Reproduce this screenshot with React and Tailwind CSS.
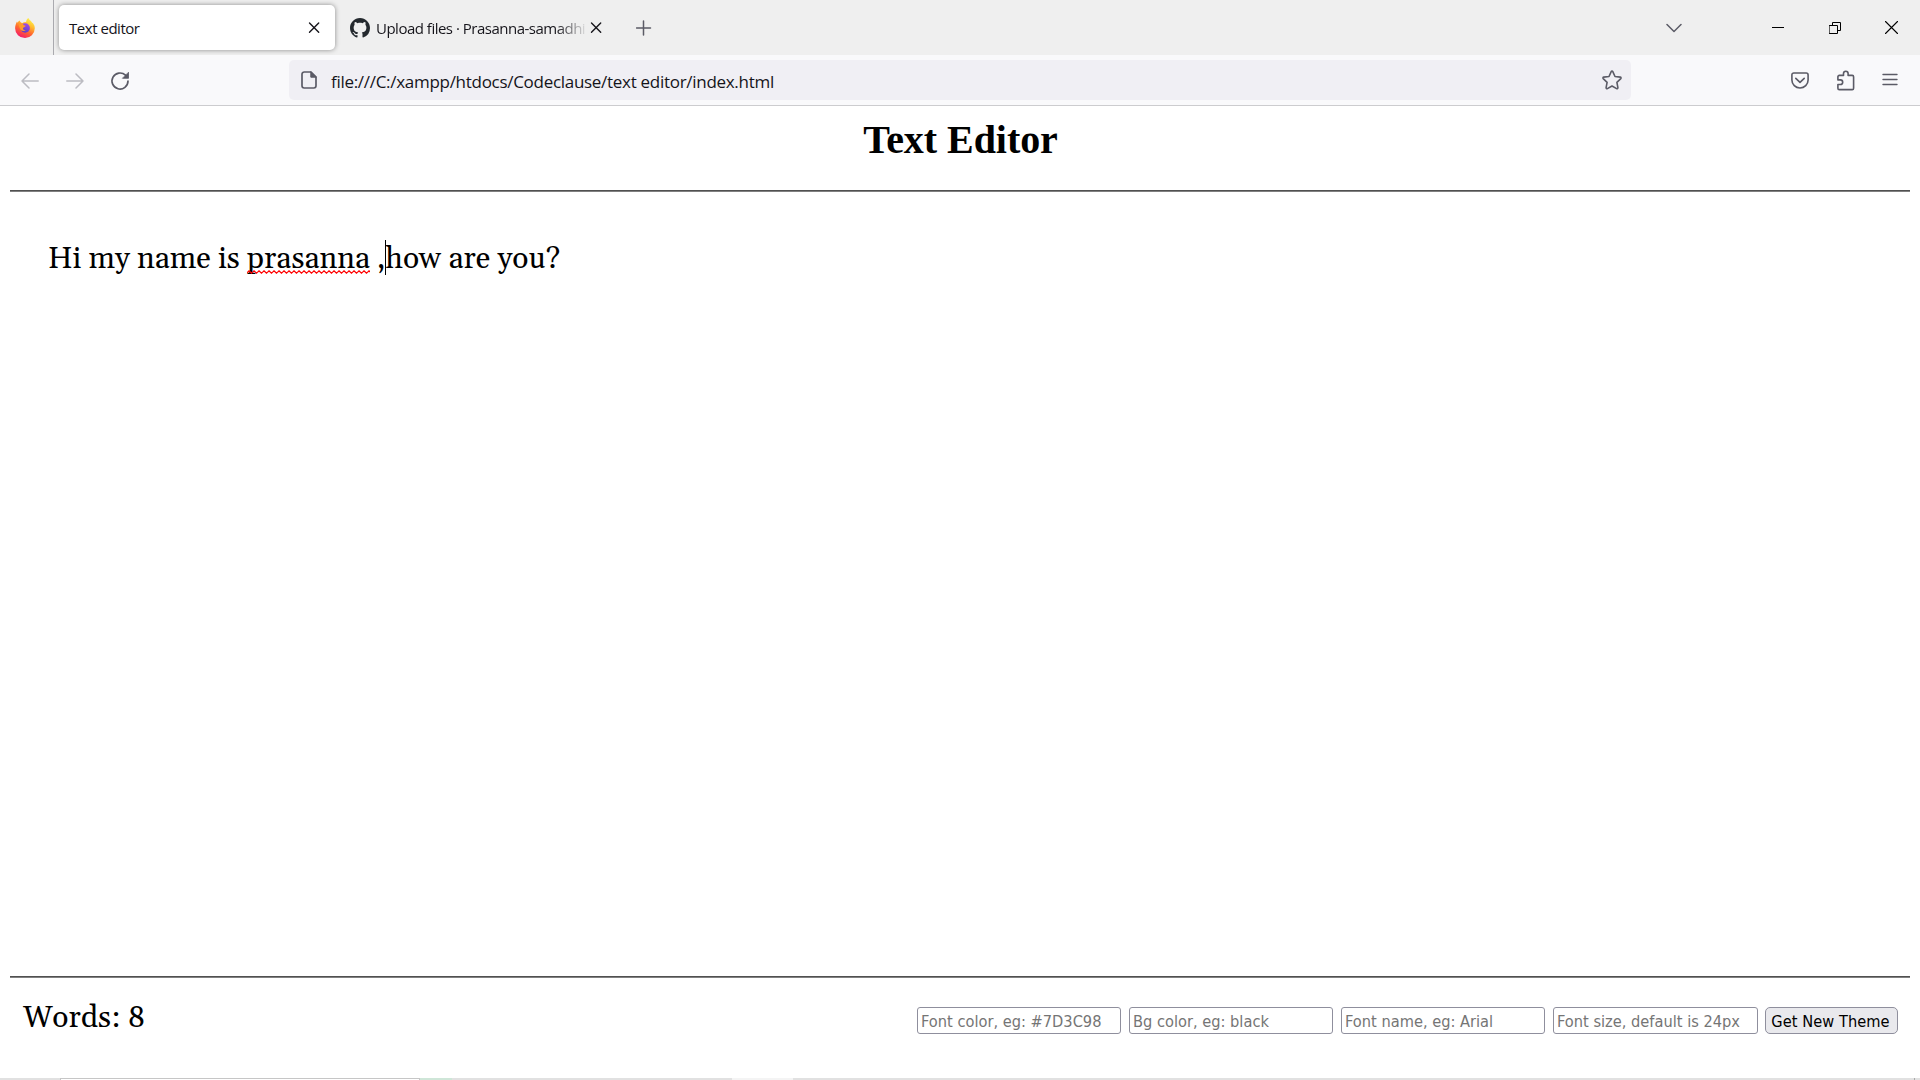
import React from "react";

const FIELDS = [
  { text: "Font color, eg: #7D3C98", size: "w-[204px]" },
  { text: "Bg color, eg: black", size: "w-[204px]" },
  { text: "Font name, eg: Arial", size: "w-[204px]" },
  { text: "Font size, default is 24px", size: "w-[205px]" },
];

function Icon({ w, h, className = "", children }) {
  return (
    <svg
      width={w}
      height={h}
      viewBox={`0 0 ${w} ${h}`}
      fill="none"
      stroke="currentColor"
      strokeWidth="1.5"
      strokeLinecap="round"
      strokeLinejoin="round"
      className={`block shrink-0 ${className}`}
    >
      {children}
    </svg>
  );
}

function Firefox() {
  return (
    <svg width="20" height="20" viewBox="0 0 20 20" className="ml-[15px] block shrink-0">
      <defs>
        <linearGradient id="flame" x1="0.8" y1="0.05" x2="0.3" y2="1">
          <stop offset="0" stopColor="#fff14a" />
          <stop offset="0.3" stopColor="#ffbd2f" />
          <stop offset="0.6" stopColor="#ff6b2d" />
          <stop offset="1" stopColor="#f5156c" />
        </linearGradient>
        <linearGradient id="globe" x1="0.7" y1="0" x2="0.3" y2="1">
          <stop offset="0" stopColor="#a44be8" />
          <stop offset="1" stopColor="#5b3fc4" />
        </linearGradient>
      </defs>
      <path
        fill="url(#flame)"
        d="M19.2 7.2c-.5-1.2-1.4-2.400-2.200-2.800C16 2.900 14 2 13.400.1c-1.500 1-2.200 2.600-2.300 4C9.500 4 8.300 4.400 7.400 5 6 4.800 5.200 3.800 4.600 2.500 3.600 3 3 4 2.700 4.800L2 3.600C1.200 5 .1 8 .1 10.200A9.800 9.800 0 0 0 9.900 20a9.800 9.800 0 0 0 9.900-9.700c0-1.200-.2-2.200-.6-3.100z"
      />
      <circle cx="10.200" cy="10" r="4.700" fill="url(#globe)" />
      <path fill="#ff9a2c" d="M3.500 6.300c2-.9 3.600-.7 4.500-.2.200 1.200 1.600 1.500 2.700 1.700-.3 1.300-2 1.300-2.700 2.200-.3 1.400 1 2.500 2.700 2-1.400 1.600-4.500 1.300-5.700-1.200-.7-1.500-.9-3-1.500-4.500z" />
    </svg>
  );
}

function GithubMark() {
  return (
    <svg width="20" height="20" viewBox="0 0 16 16" fill="#24292e" className="block shrink-0">
      <path d="M8 0C3.58 0 0 3.58 0 8c0 3.54 2.29 6.53 5.47 7.59.4.07.55-.17.55-.38 0-.19-.01-.82-.01-1.49-2.01.37-2.53-.49-2.69-.94-.09-.23-.48-.94-.82-1.13-.28-.15-.68-.52-.01-.53.63-.01 1.08.58 1.23.82.72 1.21 1.87.87 2.33.66.07-.52.28-.87.51-1.07-1.78-.2-3.64-.89-3.64-3.95 0-.87.31-1.59.82-2.15-.08-.2-.36-1.02.08-2.12 0 0 .67-.21 2.2.82.64-.18 1.32-.27 2-.27.68 0 1.36.09 2 .27 1.53-1.04 2.2-.82 2.2-.82.44 1.1.16 1.92.08 2.12.51.56.82 1.27.82 2.15 0 3.07-1.87 3.75-3.65 3.95.29.25.54.73.54 1.48 0 1.07-.01 1.93-.01 2.2 0 .21.15.46.55.38A8.013 8.013 0 0016 8c0-4.42-3.58-8-8-8z" />
    </svg>
  );
}

function CloseGlyph({ className }) {
  return (
    <Icon w={12} h={12} className={`text-[#15141a] ${className}`}>
      <path d="M1.500 1l9.200 9.200M10.700 1l-9.200 9.200" strokeWidth="1.400" />
    </Icon>
  );
}

function TabStrip() {
  return (
    <header className="flex h-[55px] items-center bg-[#efefef] text-[15px] tracking-[-0.47px] text-[#15141a]">
      <Firefox />
      <div className="ml-[18px] h-full w-px shrink-0 bg-[#aaaaaf]" />
      <div className="ml-[5px] flex h-[45px] w-[276px] shrink-0 items-center rounded-[5px] bg-white pl-[10px] shadow-[0_0_5px_rgba(0,0,0,0.42)]">
        <span className="w-[231px] pt-[2px]">Text editor</span>
        <CloseGlyph className="ml-[8px]" />
      </div>
      <div className="ml-[15px] flex items-center">
        <GithubMark />
        <span className="ml-[6px] w-[212px] bg-linear-to-r from-[#15141a] from-85% to-transparent to-100% bg-clip-text pt-[2px] tracking-[-0.5px] whitespace-nowrap text-transparent">
          Upload files · Prasanna-samadhi
        </span>
        <CloseGlyph className="ml-[2px]" />
      </div>
      <Icon w={16} h={16} className="ml-[34px] text-[#5b5b66]">
        <path d="M7.500 1v14M.5 8h14" />
      </Icon>
      <div className="flex flex-1 items-center justify-end pr-[22px]">
        <Icon w={16} h={10} className="mr-[90px] text-[#5b5b66]">
          <path d="M1 1.500l7 7 7-7" />
        </Icon>
        <Icon w={12} h={12} className="mr-[45px] text-black">
          <path d="M0 5.500h12" strokeWidth="1" strokeLinecap="butt" />
        </Icon>
        <Icon w={12} h={12} className="mr-[44px] text-black">
          <path d="M.5 3.500h8v8h-8zM3.500 3.500v-3h8v8h-3" strokeWidth="1" strokeLinejoin="miter" />
        </Icon>
        <Icon w={13} h={13} className="text-black">
          <path d="M.5.5l12 12M12.500.5l-12 12" strokeWidth="1.100" />
        </Icon>
      </div>
    </header>
  );
}

function Toolbar() {
  return (
    <nav className="flex h-[51px] items-center border-b border-[#cccccf] bg-[#f9f9fb] text-[#5b5b66]">
      <Icon w={18} h={16} className="mt-px ml-[21px] text-[#bcbcc2]">
        <path d="M17.200 8H1M8 1L1 8l7 7" />
      </Icon>
      <Icon w={18} h={16} className="mt-px ml-[27px] text-[#bcbcc2]">
        <path d="M.8 8H17M10 1l7 7-7 7" />
      </Icon>
      <Icon w={20} h={20} className="mt-[2px] ml-[26px]">
        <path d="M18 10a8 8 0 1 1-2.500-5.800" strokeWidth="1.700" />
        <path d="M18.500 1.600v5.700h-5.700z" fill="currentColor" strokeWidth=".8" />
      </Icon>
      <div className="ml-[159px] flex h-[40px] w-[1342px] items-center rounded-[5px] bg-[#f0eff4] pl-[12px]">
        <Icon w={16} h={18} className="">
          <path d="M10 1H3.200A2.200 2.200 0 0 0 1 3.200v11.600A2.200 2.200 0 0 0 3.200 17h9.600a2.200 2.200 0 0 0 2.200-2.200V6z" strokeWidth="1.700" />
          <path d="M9.800 1v5.200H15z" fill="currentColor" strokeWidth="1" />
        </Icon>
        <span className="ml-[14px] flex-1 pt-[3px] text-[17px] tracking-[-0.29px] whitespace-nowrap text-[#15141a]">
          file:///C:/xampp/htdocs/Codeclause/text editor/index.html
        </span>
        <Icon w={20} h={20} className="mr-[9px]">
          <path d="M9.200 1.600a.9.900 0 0 1 1.600 0l2.200 4.900 5.300.6a.9.900 0 0 1 .5 1.500l-3.900 3.700 1 5.400a.9.900 0 0 1-1.300.9L10 16l-4.600 2.600a.9.900 0 0 1-1.300-.9l1-5.400-3.900-3.700a.9.900 0 0 1 .5-1.500L7 6.500z" strokeWidth="1.600" />
        </Icon>
      </div>
      <div className="flex flex-1 items-center justify-end pr-[22px]">
        <Icon w={18} h={17} className="mr-[28px]">
          <path d="M2.800 1h12.400A1.900 1.900 0 0 1 17.100 2.900v5a8.100 8.100 0 0 1-16.200 0v-5A1.900 1.900 0 0 1 2.800 1z" strokeWidth="1.600" />
          <path d="M4.800 6.400L9 10.400l4.200-4" strokeWidth="1.600" />
        </Icon>
        <Icon w={18} h={21} className="mr-[27px]">
          <path d="M2.300 5.400h4.200V3.600a2.300 2.300 0 0 1 4.600 0v1.800h4.100a1.400 1.400 0 0 1 1.400 1.400v11.400a1.400 1.400 0 0 1-1.400 1.400H2.300a1.400 1.400 0 0 1-1.400-1.400v-3.700h2.500a2.300 2.300 0 0 0 0-4.600H.9V6.800a1.400 1.400 0 0 1 1.400-1.400z" strokeWidth="1.600" />
        </Icon>
        <Icon w={16} h={14} className="mb-[2px]">
          <path d="M1 2.500h14M1 7.500h14M1 12.500h14" strokeWidth="1.400" />
        </Icon>
      </div>
    </nav>
  );
}

function Rule() {
  return <div className="mx-[10px] h-[2px] border-t border-[#505050] bg-[#808080]" />;
}

function Squiggle() {
  return (
    <svg width="123" height="4" className="absolute top-[28px] left-0 block">
      <defs>
        <pattern id="wave" width="5" height="4" patternUnits="userSpaceOnUse">
          <path d="M-.5 3.200L2 .8l2.500 2.400L7 .8" fill="none" stroke="#f00" strokeWidth="1.200" />
        </pattern>
      </defs>
      <rect width="123" height="4" fill="url(#wave)" />
    </svg>
  );
}

function BottomEdge() {
  return (
    <div className="flex h-[2px] bg-[#e1e1e1]">
      <div className="w-[60px]" />
      <div className="w-[360px] border-x border-t border-[#c6c6c6] bg-white" />
      <div className="w-[32px] bg-[#cfe6d8]" />
      <div className="w-[280px]" />
      <div className="w-[61px] bg-[#f4f4f4]" />
      <div className="w-[1121px]" />
      <div className="w-px bg-[#aaaaaa]" />
    </div>
  );
}

export default function App() {
  return (
    <div className="flex h-[1080px] w-[1920px] flex-col overflow-hidden bg-white font-['Open_Sans',sans-serif]">
      <TabStrip />
      <Toolbar />
      <h1 className="h-[84px] pt-[11px] pl-px text-center font-['Liberation_Serif',serif] text-[40px] leading-[46px] font-bold tracking-[-0.05px] text-black">
        Text Editor
      </h1>
      <Rule />
      <main className="flex-1 pt-[50px] pl-[48px] font-['Gelasio','Georgia','Liberation_Serif',serif] text-[30px] leading-[34px] whitespace-pre text-black">
        <p className="flex">
          <span>Hi my name is </span>
          <span className="relative">
            prasanna
            <Squiggle />
          </span>
          <span> ,</span>
          <span className="relative">
            <span className="absolute -top-[2px] left-0 h-[35px] w-px bg-black" />
            how are you?
          </span>
        </p>
      </main>
      <Rule />
      <footer className="flex h-[100px] items-start justify-between pr-[22px] pl-[23px]">
        <span className="pt-[23px] font-['Gelasio','Georgia','Liberation_Serif',serif] text-[30px] leading-[34px] text-black">
          Words: 8
        </span>
        <form className="flex pt-[29px] font-['DejaVu_Sans_Condensed','DejaVu_Sans',sans-serif] text-[16.25px]">
          {FIELDS.map((f) => (
            <input
              key={f.text}
              placeholder={f.text}
              className={`mr-[8px] h-[27px] rounded-[3px] border border-[#8f8f9d] bg-white px-[3px] pt-[2px] placeholder:text-[#757575] last-of-type:mr-[7px] ${f.size}`}
            />
          ))}
          <button
            type="button"
            className="h-[27px] w-[133px] rounded-[5px] border border-[#8f8f9d] bg-[#e9e9ed] pt-[2px] pr-[2px] leading-[22px] tracking-[0.05px] whitespace-nowrap text-black"
          >
            Get New Theme
          </button>
        </form>
      </footer>
      <BottomEdge />
    </div>
  );
}
